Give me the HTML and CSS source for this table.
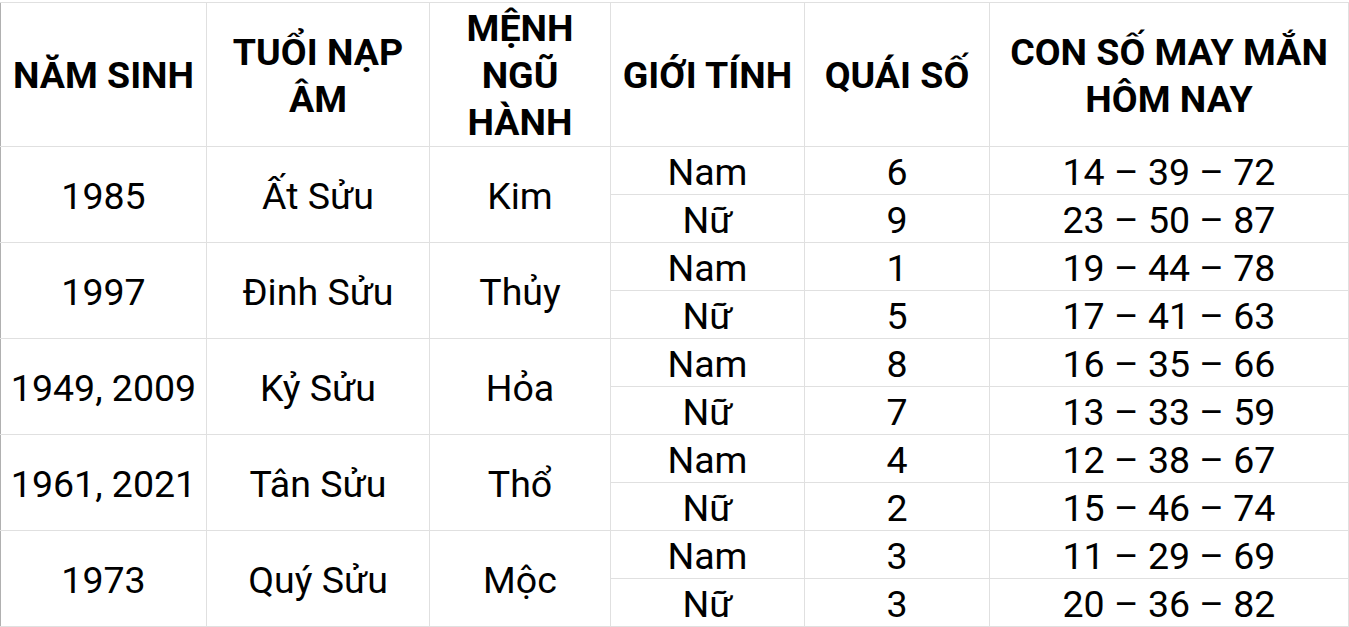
FILE: index.html
```html
<!DOCTYPE html>
<html lang="vi">
<head>
<meta charset="utf-8">
<title>Con số may mắn</title>
<link rel="stylesheet" href="styles.css">
</head>
<body>
<table class="lucky">
  <colgroup>
    <col class="c1"><col class="c2"><col class="c3"><col class="c4"><col class="c5"><col class="c6">
  </colgroup>
  <thead>
    <tr class="head">
      <th class="first">NĂM SINH</th>
      <th>TUỔI NẠP ÂM</th>
      <th>MỆNH NGŨ HÀNH</th>
      <th>GIỚI TÍNH</th>
      <th>QUÁI SỐ</th>
      <th>CON SỐ MAY MẮN HÔM NAY</th>
    </tr>
  </thead>
  <tbody>
    <tr><td rowspan="2" class="first">1985</td><td rowspan="2">Ất Sửu</td><td rowspan="2">Kim</td><td>Nam</td><td>6</td><td>14 – 39 – 72</td></tr>
    <tr><td>Nữ</td><td>9</td><td>23 – 50 – 87</td></tr>
    <tr><td rowspan="2" class="first">1997</td><td rowspan="2">Đinh Sửu</td><td rowspan="2">Thủy</td><td>Nam</td><td>1</td><td>19 – 44 – 78</td></tr>
    <tr><td>Nữ</td><td>5</td><td>17 – 41 – 63</td></tr>
    <tr><td rowspan="2" class="first">1949, 2009</td><td rowspan="2">Kỷ Sửu</td><td rowspan="2">Hỏa</td><td>Nam</td><td>8</td><td>16 – 35 – 66</td></tr>
    <tr><td>Nữ</td><td>7</td><td>13 – 33 – 59</td></tr>
    <tr><td rowspan="2" class="first">1961, 2021</td><td rowspan="2">Tân Sửu</td><td rowspan="2">Thổ</td><td>Nam</td><td>4</td><td>12 – 38 – 67</td></tr>
    <tr><td>Nữ</td><td>2</td><td>15 – 46 – 74</td></tr>
    <tr><td rowspan="2" class="first">1973</td><td rowspan="2">Quý Sửu</td><td rowspan="2">Mộc</td><td>Nam</td><td>3</td><td>11 – 29 – 69</td></tr>
    <tr><td>Nữ</td><td>3</td><td>20 – 36 – 82</td></tr>
  </tbody>
</table>
</body>
</html>
```
FILE: styles.css
```css
html, body {
  margin: 0;
  padding: 0;
  background: #ffffff;
}
body {
  padding-top: 2px;
  font-family: Roboto, "Liberation Sans", sans-serif;
  color: #000000;
}
.lucky {
  border-collapse: collapse;
  table-layout: fixed;
  width: 1348px;
}
.c1 { width: 206px; }
.c2 { width: 223px; }
.c3 { width: 181px; }
.c4 { width: 194px; }
.c5 { width: 185px; }
.c6 { width: 359px; }
.lucky th,
.lucky td {
  border: 1px solid #e0e0e0;
  padding: 0 4px;
  text-align: center;
  vertical-align: middle;
  font-size: 37.5px;
}
.lucky th {
  font-weight: 700;
  line-height: 47px;
  padding-top: 2px;
}
.lucky td {
  font-weight: 400;
  line-height: 44px;
  padding-top: 3px;
}
.lucky .first {
  border-left-color: #b0b0b0;
}
.head { height: 144px; }
.lucky tbody tr { height: 48px; }
```
